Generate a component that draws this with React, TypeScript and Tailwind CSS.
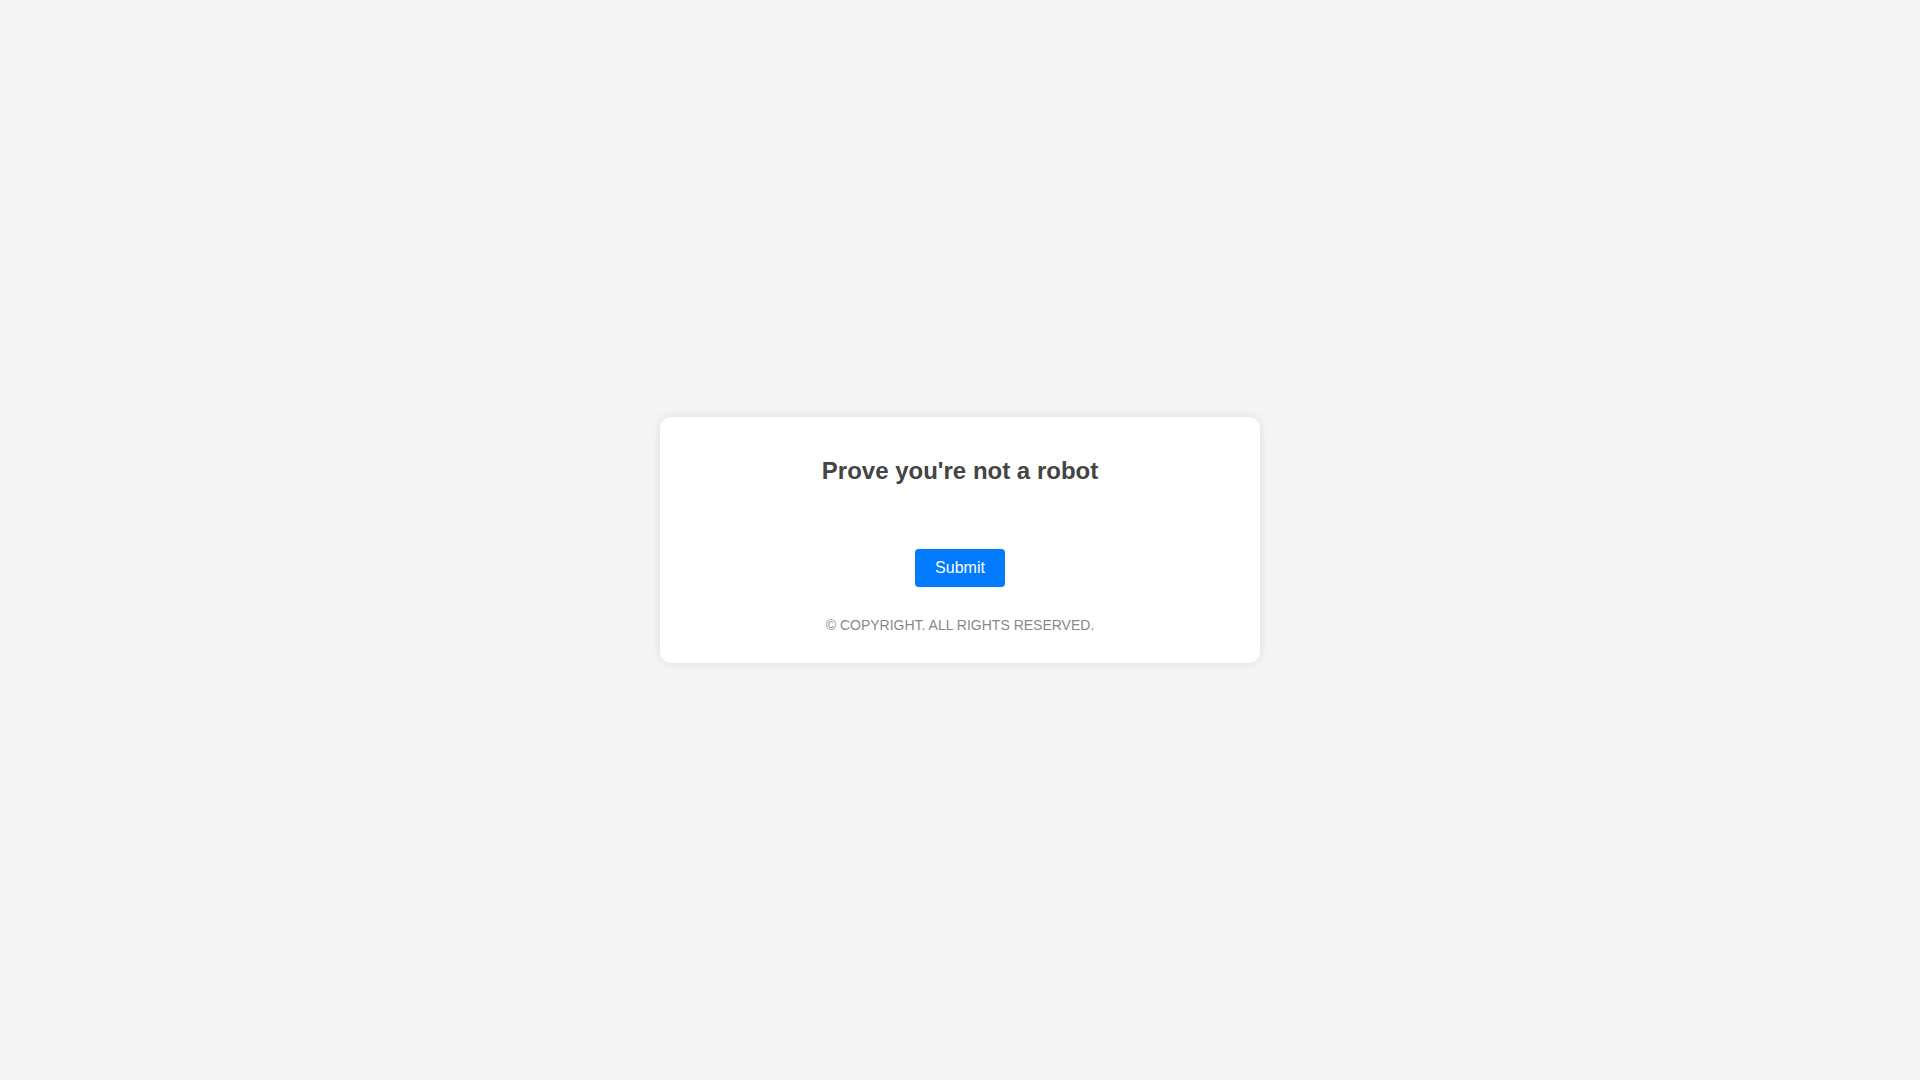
export default function App() {
  return (
    <div className="flex min-h-screen items-center justify-center bg-[#f4f4f4] font-['Liberation_Sans',Arial,sans-serif]">
      <div className="flex w-[600px] flex-col items-center rounded-[10px] bg-white px-10 pt-[40px] pb-[29px] shadow-[0_0_10px_rgba(0,0,0,0.1)]">
        <h1 className="text-[24px] leading-[28px] font-bold text-[#444]">Prove you're not a robot</h1>
        <button className="mt-[64px] h-[38px] rounded-[4px] bg-[#007bff] px-[20px] text-[16px] text-white">Submit</button>
        <p className="mt-[29px] text-[14px] leading-[18px] text-[#888] uppercase">© Copyright. All rights reserved.</p>
      </div>
    </div>
  );
}
